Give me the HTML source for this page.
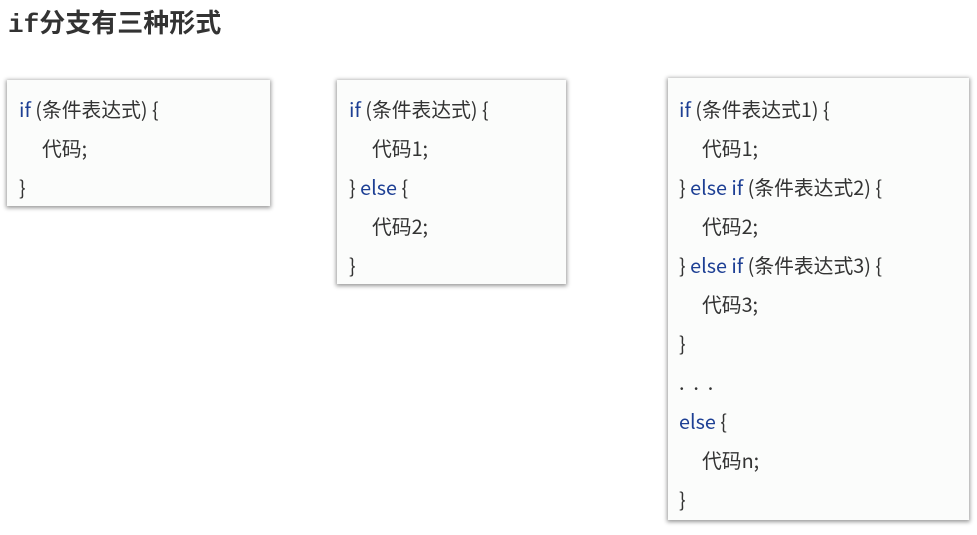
<!DOCTYPE html>
<html><head><meta charset="utf-8"><style>
body{margin:0;width:977px;height:535px;background:#fff;position:relative;overflow:hidden;font-family:"Liberation Sans","Noto Sans CJK SC",sans-serif;}
h1{position:absolute;left:8px;top:5px;margin:0;font-size:26px;line-height:34px;font-weight:bold;color:#333;font-family:"Liberation Mono","Noto Sans CJK SC",monospace;letter-spacing:0;}
h1 span{font-family:"Noto Sans CJK SC",sans-serif;}
.box{position:absolute;background:#fbfcfb;box-shadow:0 1px 4px 1px rgba(0,0,0,0.4);box-sizing:border-box;padding-top:9px;padding-left:12px;}
.l{height:39px;line-height:39px;font-size:19.8px;color:#333;white-space:pre;font-family:"Noto Sans CJK SC",sans-serif;}
.k{color:#1d3f94;}
.i{padding-left:23px;}
</style></head><body>
<h1>if<span>分支有三种形式</span></h1>
<div class="box" style="left:7px;top:80px;width:263px;height:126px;">
<div class="l"><span class="k">if</span> (条件表达式) {</div>
<div class="l i">代码;</div>
<div class="l">}</div>
</div>
<div class="box" style="left:337px;top:80px;width:229px;height:204px;">
<div class="l"><span class="k">if</span> (条件表达式) {</div>
<div class="l i">代码1;</div>
<div class="l">} <span class="k">else</span> {</div>
<div class="l i">代码2;</div>
<div class="l">}</div>
</div>
<div class="box" style="left:668px;top:78px;width:301px;height:442px;padding-top:11px;padding-left:11px;">
<div class="l"><span class="k">if</span> (条件表达式1) {</div>
<div class="l i">代码1;</div>
<div class="l">} <span class="k">else if</span> (条件表达式2) {</div>
<div class="l i">代码2;</div>
<div class="l">} <span class="k">else if</span> (条件表达式3) {</div>
<div class="l i">代码3;</div>
<div class="l">}</div>
<div class="l">.  .  .</div>
<div class="l"><span class="k">else</span> {</div>
<div class="l i">代码n;</div>
<div class="l">}</div>
</div>
</body></html>
